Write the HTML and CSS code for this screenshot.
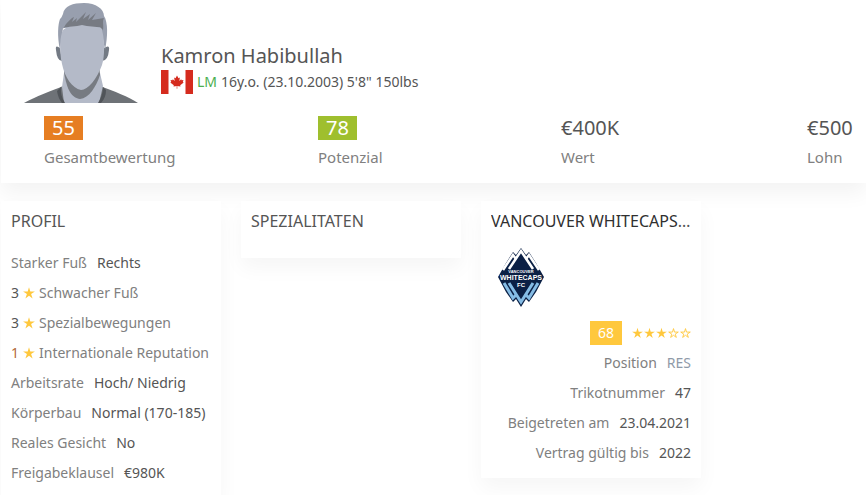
FILE: index.html
```html
<!DOCTYPE html>
<html lang="de">
<head>
<meta charset="utf-8">
<title>Kamron Habibullah</title>
<link rel="stylesheet" href="styles.css">
</head>
<body>
<svg class="defs" aria-hidden="true">
  <symbol id="star" viewBox="0 0 12 12"><path d="M6 .3 7.300 4.600H11.900L8.100 7.100 9.600 11.500 6 8.800 2.400 11.500 3.900 7.100 .1 4.600H4.700Z" fill="#ffc83d"/></symbol>
  <symbol id="star-open" viewBox="0 0 12 12"><path d="M6 1.200 7.100 5H11.200L7.900 7.200 9.100 10.800 6 8.500 2.900 10.800 4.100 7.200 .8 5H4.900Z" fill="none" stroke="#ffc83d"/></symbol>
</svg>
<header class="player">
  <div class="intro">
    <svg class="portrait" viewBox="0 0 120 104" aria-hidden="true">
      <path d="M4 103C14 97 34 90 43 86L80 86C94 91 109 97 118 103Z" fill="#6e7277"/>
      <path d="M42 87 44 73H80L83 86 79 103H44Z" fill="#b4bac8"/>
      <path d="M41 87 37 91Q38 98 42 103H45Q40 95 41 87Z" fill="#505459"/>
      <path d="M83 87 86 90Q86 98 81 103H78Q83 95 83 87Z" fill="#505459"/>
      <path d="M44 72C47 91 52 98 60 99C69 98 76 87 80 75L79 62H44Z" fill="#777b82"/>
      <path d="M40 48Q35 44 36 50 37 61 42 61ZM84 48Q90 44 89 50 88 61 82 61Z" fill="#737a84"/>
      <path d="M40 50C37 36 38 24 40 19 42 17 42 16 43 14 44 6 53 3 64 3 76 3 84 9 84 16 88 22 88 36 85 50L81 28H43Z" fill="#989fae"/>
      <path d="M43 29 46 24C48 22 51 18 54 17L52 22 57 18 56 22 66 12 63 19 70 14 68 20 76 13 72 20 84 18C82 22 84 25 83 30L80 27H45Z" fill="#777b83"/>
      <path d="M43 30C48 25 56 27 62 25 68 27 76 26 81 28 85 36 85 57 82 65 77 79 68 90 61 90 52 88 45 78 42 64 39 49 40 36 43 30Z" fill="#b4bac8"/>
    </svg>
    <div class="identity">
      <h1>Kamron Habibullah</h1>
      <p class="meta">
        <svg class="flag" viewBox="0 0 32 24" role="img" aria-label="Kanada">
          <path d="M0 0H32V24H0Z" fill="#fff"/>
          <path d="M0 0H7.500V24H0ZM24.500 0H32V24H24.500Z" fill="#d52b1e"/>
          <path d="M16 5.500 17.500 8.200 18.900 7.400 18.300 11 20.200 9.300 20.600 10.300 22.500 10 21.800 12 22.700 12.600 19.200 15.300 19.500 16.500 16.300 16.100V18.700H15.700V16.100L12.500 16.500 12.800 15.300 9.300 12.600 10.200 12 9.500 10 11.400 10.300 11.800 9.300 13.700 11 13.100 7.400 14.500 8.200Z" fill="#d52b1e"/>
        </svg>
        <span class="pos">LM</span>
        <span>16y.o. (23.10.2003) 5'8" 150lbs</span>
      </p>
    </div>
  </div>
  <div class="stats">
    <div><div class="figure"><span class="badge orange">55</span></div><div class="label">Gesamtbewertung</div></div>
    <div><div class="figure"><span class="badge green">78</span></div><div class="label">Potenzial</div></div>
    <div><div class="figure">€400K</div><div class="label">Wert</div></div>
    <div><div class="figure">€500</div><div class="label">Lohn</div></div>
  </div>
</header>
<main class="cards">
  <section class="card">
    <h2>PROFIL</h2>
    <ul>
      <li><span class="label">Starker Fuß</span><span class="value">Rechts</span></li>
      <li class="rated"><span>3</span><svg class="star"><use href="#star"/></svg><span class="label">Schwacher Fuß</span></li>
      <li class="rated"><span>3</span><svg class="star"><use href="#star"/></svg><span class="label">Spezialbewegungen</span></li>
      <li class="rated"><span class="low">1</span><svg class="star"><use href="#star"/></svg><span class="label">Internationale Reputation</span></li>
      <li><span class="label">Arbeitsrate</span><span class="value">Hoch/ Niedrig</span></li>
      <li><span class="label">Körperbau</span><span class="value">Normal (170-185)</span></li>
      <li><span class="label">Reales Gesicht</span><span class="value">No</span></li>
      <li><span class="label">Freigabeklausel</span><span class="value">€980K</span></li>
    </ul>
  </section>
  <section class="card">
    <h2>SPEZIALITATEN</h2>
  </section>
  <section class="card">
    <h2><a href="#">VANCOUVER WHITECAPS FC</a></h2>
    <svg class="crest" viewBox="0 0 60 60" role="img" aria-label="Vancouver Whitecaps FC">
      <path d="M30 0 35 7 38 4 45 15 53 29 45 44 38 54 35 51 30 59 25 51 22 54 15 44 7 29 15 15 22 4 25 7Z" fill="#0b2045"/>
      <g fill="none" stroke="#fff" stroke-width="2.600">
        <path d="M12 22 22 7 25 11M48 22 38 7 35 11"/>
        <path d="M18 21 30 3 42 21"/>
      </g>
      <g fill="none" stroke="#85bce5" stroke-width="3">
        <path d="M13 35 22 50 25 47M47 35 38 50 35 47"/>
        <path d="M18 35 30 54 42 35"/>
      </g>
      <path d="M22 34 30 48 38 34Z" fill="#0b2045"/>
      <g fill="#fff" text-anchor="middle">
        <text x="30" y="25" class="crest-small">VANCOUVER</text>
        <text x="30" y="32" class="crest-name">WHITECAPS</text>
        <text x="30" y="39" class="crest-fc">FC</text>
      </g>
    </svg>
    <ul class="right">
      <li><span class="badge yellow">68</span><span class="value stars" role="img" aria-label="3 von 5 Sternen"><svg><use href="#star"/></svg><svg><use href="#star"/></svg><svg><use href="#star"/></svg><svg><use href="#star-open"/></svg><svg><use href="#star-open"/></svg></span></li>
      <li><span class="label">Position</span><span class="value reserve">RES</span></li>
      <li><span class="label">Trikotnummer</span><span class="value">47</span></li>
      <li><span class="label">Beigetreten am</span><span class="value">23.04.2021</span></li>
      <li><span class="label">Vertrag gültig bis</span><span class="value">2022</span></li>
    </ul>
  </section>
</main>
</body>
</html>
```
FILE: styles.css
```css
* { box-sizing: border-box; }
body {
  margin: 0;
  background: #fff;
  color: #555;
  font: 14px/20px "Noto Sans", "Open Sans", sans-serif;
  overflow-x: hidden;
}
h1, h2, p, ul { margin: 0; padding: 0; font-weight: 400; }
ul { list-style: none; }
.defs { position: absolute; width: 0; height: 0; }
.player {
  margin-left: 1px;
  padding-bottom: 12px;
  box-shadow: 0 10px 20px rgba(0, 0, 0, .05);
}
.intro {
  display: flex;
  align-items: flex-end;
  gap: 21px;
  padding-left: 19px;
  height: 104px;
}
.portrait { width: 120px; height: 104px; }
.identity { padding-bottom: 10px; }
h1 { font-size: 20px; line-height: 28px; }
.meta { display: flex; align-items: center; gap: 4px; height: 24px; }
.flag { width: 32px; height: 24px; }
.pos { color: #4caf50; }
.stats {
  display: grid;
  grid-template-columns: 274fr 243fr 246fr 59fr;
  padding: 9px 0 0 43px;
}
.figure { font-size: 20px; line-height: 30px; }
.label { color: #808080; }
.stats .label { font-size: 15px; line-height: 28px; }
.badge {
  display: inline-block;
  padding: 0 8px;
  line-height: 24px;
  color: #fff;
}
.orange { background: #e67e22; }
.green { background: #9fbf2e; }
.yellow { background: #ffc83d; }
.cards {
  display: grid;
  grid-template-columns: 220fr 220fr 220fr 145fr;
  gap: 20px;
  align-items: start;
  margin: 18px 0 0 1px;
}
.card {
  min-width: 0;
  padding: 10px;
  background: #fff;
  box-shadow: 0 10px 20px rgba(0, 0, 0, .04);
}
h2 {
  margin-bottom: 17px;
  font-size: 16px;
  line-height: 20px;
  overflow: hidden;
  text-overflow: ellipsis;
  white-space: nowrap;
}
h2 a { color: #303030; text-decoration: none; }
li {
  display: flex;
  align-items: center;
  gap: 10px;
  height: 30px;
  white-space: nowrap;
}
.rated { gap: 4px; }
.low { color: #b36b3c; }
.star { width: 12px; height: 12px; }
.right li { justify-content: flex-end; }
.crest { display: block; width: 60px; height: 60px; margin-bottom: 10px; }
.crest text { font-family: "Liberation Sans", sans-serif; font-weight: 700; }
.crest-small { font-size: 4px; }
.crest-name { font-size: 7px; }
.crest-fc { font-size: 6px; }
.stars { display: flex; gap: 1px; }
.stars svg { width: 11px; height: 12px; }
.reserve { color: #8f9aa8; }
```
